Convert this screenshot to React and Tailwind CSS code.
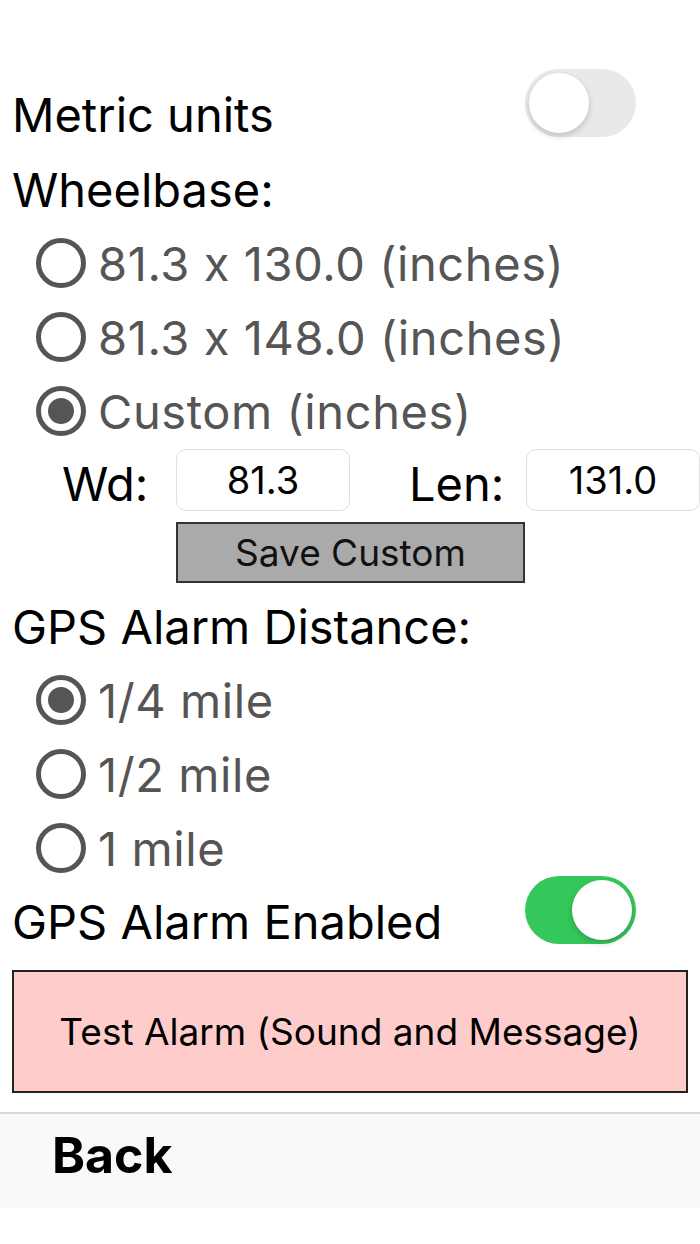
import React, { useState } from 'react';

const Toggle = ({ on, onChange }) => (
    <button
        type="button"
        onClick={() => onChange(!on)}
        className={`relative -mt-[9px] mr-[64px] h-[68px] w-[111px] shrink-0 rounded-full ${on ? 'bg-[#34c759]' : 'bg-[#e9e9ea]'}`}
    >
        <span
            className={`absolute top-[4px] h-[60px] w-[60px] rounded-full bg-white shadow-[0_3px_6px_rgba(0,0,0,0.18)] ${on ? 'left-[47px]' : 'left-[4px]'}`}
        ></span>
    </button>
);

const Radio = ({ checked, label, onSelect }) => (
    <div className="flex h-[74px] items-center pl-[36px]" onClick={onSelect}>
        <span className="flex h-[50px] w-[50px] shrink-0 items-center justify-center rounded-full border-[5px] border-[#555]">
            {checked && <span className="h-[26px] w-[26px] rounded-full bg-[#555]"></span>}
        </span>
        <span className="ml-[12px] text-[47px] leading-none tracking-[0.6px] text-[#555]">{label}</span>
    </div>
);

const App = () => {
    const [metric, setMetric] = useState(false);
    const [alarmOn, setAlarmOn] = useState(true);
    const [wheelbase, setWheelbase] = useState(2);
    const [distance, setDistance] = useState(0);
    const [wd, setWd] = useState('81.3');
    const [len, setLen] = useState('131.0');

    const wheelbases = ['81.3 x 130.0 (inches)', '81.3 x 148.0 (inches)', 'Custom (inches)'];
    const distances = ['1/4 mile', '1/2 mile', '1 mile'];

    return (
        <div className="min-h-[1244px] bg-white font-['Inter',sans-serif] text-black [font-feature-settings:'calt'_0]">
            <div className="pt-[78px]">
                <div className="flex h-[74px] items-start justify-between">
                    <span className="pl-[12px] pt-[13px] text-[47px] leading-none">Metric units</span>
                    <Toggle on={metric} onChange={setMetric} />
                </div>
                <div className="flex h-[74px] items-center pl-[12px] text-[47px] leading-none">Wheelbase:</div>
                {wheelbases.map((w, i) => (
                    <Radio key={w} label={w} checked={wheelbase === i} onSelect={() => setWheelbase(i)} />
                ))}
                <div className="flex h-[68px] items-start pt-px">
                    <span className="w-[176px] pl-[62px] pt-[11px] text-[47px] leading-none">Wd:</span>
                    <input
                        value={wd}
                        onChange={(e) => setWd(e.target.value)}
                        className="h-[62px] w-[174px] rounded-[10px] border border-[#ddd] text-center text-[38px] text-black outline-none"
                    />
                    <span className="w-[176px] pl-[59px] pt-[11px] text-[47px] leading-none">Len:</span>
                    <input
                        value={len}
                        onChange={(e) => setLen(e.target.value)}
                        className="h-[62px] w-[174px] rounded-[10px] border border-[#ddd] text-center text-[38px] text-black outline-none"
                    />
                </div>
                <div className="mt-[6px] pl-[176px]">
                    <button
                        type="button"
                        className="h-[61px] w-[349px] border-2 border-[#333] bg-[#aaaaaa] text-[37px] leading-none text-[#111]"
                    >
                        Save Custom
                    </button>
                </div>
                <div className="mt-[6px] flex h-[74px] items-center pl-[12px] text-[47px] leading-none">GPS Alarm Distance:</div>
                {distances.map((d, i) => (
                    <Radio key={d} label={d} checked={distance === i} onSelect={() => setDistance(i)} />
                ))}
                <div className="flex h-[74px] items-start justify-between">
                    <span className="pl-[12px] pt-[13px] text-[47px] leading-none">GPS Alarm Enabled</span>
                    <Toggle on={alarmOn} onChange={setAlarmOn} />
                </div>
                <div className="mt-[11px] px-[12px]">
                    <button
                        type="button"
                        className="h-[123px] w-full border-2 border-[#222] bg-[#ffcccc] text-[37px] leading-none text-black"
                    >
                        Test Alarm (Sound and Message)
                    </button>
                </div>
            </div>
            <div className="mt-[19px] h-[96px] border-t-2 border-[#d8d8d8] bg-[#f9f9f9]">
                <button type="button" className="pl-[52px] pt-[16px] text-[50px] font-bold leading-none">
                    Back
                </button>
            </div>
        </div>
    );
};

export default App;
